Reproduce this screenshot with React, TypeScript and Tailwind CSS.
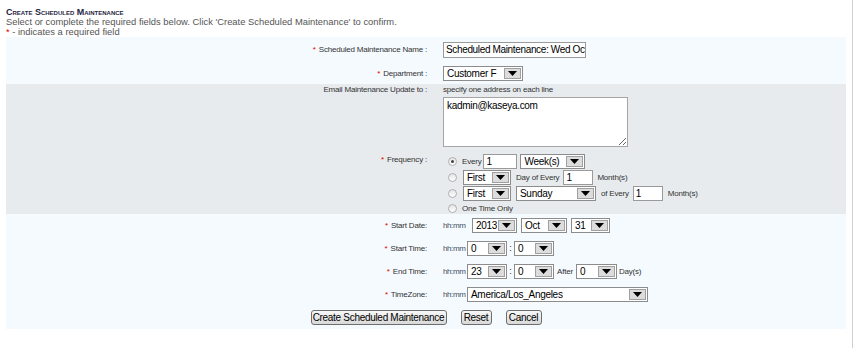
import React from 'react'

function Star() {
  return <span className="mr-[3px] text-[#e00000]">*</span>
}

function Label({ text, req, className = '' }: { text: string; req?: boolean; className?: string }) {
  return (
    <div className={`w-[421px] shrink-0 text-right text-[8px] tracking-[-0.2px] text-[#333] ${className}`}>
      {req && <Star />}
      {text}
    </div>
  )
}

function Select({ value, w }: { value: string; w: string }) {
  return (
    <div className={`flex h-[15px] shrink-0 border border-[#8c8c8c] bg-white ${w}`}>
      <span className="flex-1 overflow-hidden whitespace-nowrap pl-[3px] text-[10px] leading-[13px] tracking-[-0.3px] text-black">
        {value}
      </span>
      <span className="m-[1px] flex w-[17px] items-center justify-center border border-[#a0a0a0] bg-[#dcdcdc]">
        <svg width="9" height="5" viewBox="0 0 9 5">
          <path d="M0 0H9L4.5 5Z" fill="#000" />
        </svg>
      </span>
    </div>
  )
}

function Field({ value, w }: { value: string; w: string }) {
  return (
    <div
      className={`h-[15px] shrink-0 overflow-hidden whitespace-nowrap border border-[#9a9a9a] bg-white pl-[2px] text-[10px] leading-[13px] text-black ${w}`}
    >
      {value}
    </div>
  )
}

function Radio({ checked }: { checked?: boolean }) {
  return (
    <span className="ml-[5px] flex h-[9px] w-[9px] shrink-0 items-center justify-center rounded-full border border-[#b0b0b0] bg-linear-to-b from-[#e4e4e4] to-white">
      {checked && <span className="h-[3px] w-[3px] rounded-full bg-[#444]" />}
    </span>
  )
}

function Small({ children, className = '' }: { children: React.ReactNode; className?: string }) {
  return (
    <span className={`shrink-0 whitespace-nowrap text-[8px] tracking-[-0.2px] text-[#333] ${className}`}>{children}</span>
  )
}

function HhMm() {
  return <span className="w-[24px] shrink-0 text-[8px] tracking-[-0.4px] text-[#3f4f60]">hh:mm</span>
}

function Button({ label, w }: { label: string; w: string }) {
  return (
    <div
      className={`flex h-[15px] items-center justify-center rounded-[3px] border border-[#6e6e6e] bg-linear-to-b from-[#f8f8f8] to-[#d8d8d8] text-[10px] tracking-[-0.3px] text-black ${w}`}
    >
      {label}
    </div>
  )
}

export default function App() {
  return (
    <div className="h-[348px] w-[853px] border-r border-[#d0d0d0] bg-white font-['Liberation_Sans',Arial,sans-serif]">
      <div className="px-[6px] pt-[7px]">
        <div className="h-[10px] text-[9px] font-bold leading-[10px] text-[#1f2340] [font-variant:small-caps]">
          Create Scheduled Maintenance
        </div>
        <div className="h-[10px] text-[9.4px] leading-[10px] text-[#555]">
          Select or complete the required fields below. Click 'Create Scheduled Maintenance' to confirm.
        </div>
        <div className="h-[10px] text-[9.4px] leading-[10px] text-[#555]">
          <span className="text-[#e00000]">*</span> - indicates a required field
        </div>
      </div>

      <div className="ml-[6px] w-[840px]">
        {/* name + department */}
        <div className="flex flex-col gap-[8px] bg-[#f5faff] pb-[3px] pt-[5px]">
          <div className="flex h-[16px] items-center">
            <Label text="Scheduled Maintenance Name :" req />
            <div className="ml-[16px] h-[16px] w-[143px] overflow-hidden whitespace-nowrap border border-[#9a9a9a] bg-white pl-[2px] text-[10px] leading-[14px] tracking-[-0.35px] text-black">
              Scheduled Maintenance: Wed Oct
            </div>
          </div>
          <div className="flex h-[15px] items-center">
            <Label text="Department :" req />
            <div className="ml-[16px]">
              <Select value="Customer F" w="w-[80px]" />
            </div>
          </div>
        </div>

        {/* email + frequency */}
        <div className="h-[130px] bg-[#e7ebee]">
          <div className="flex">
            <Label text="Email Maintenance Update to :" className="leading-[12px]" />
            <div className="ml-[16px]">
              <div className="h-[12px] text-[8px] leading-[12px] tracking-[-0.2px] text-[#333]">
                specify one address on each line
              </div>
              <textarea
                readOnly
                defaultValue="kadmin@kaseya.com"
                className="mt-[1px] block h-[50px] w-[185px] resize border border-[#a5a5a5] bg-white px-[3px] py-[2px] text-[10px] leading-[12px] tracking-[-0.3px] text-black outline-none"
              />
            </div>
          </div>
          <div className="mt-[7px] flex">
            <Label text="Frequency :" req className="leading-[12px]" />
            <div className="ml-[16px] flex flex-col">
              <div className="flex h-[15px] items-center">
                <Radio checked />
                <Small className="ml-[5px]">Every</Small>
                <Field value="1" w="ml-[2px] w-[34px]" />
                <div className="ml-[3px]">
                  <Select value="Week(s)" w="w-[65px]" />
                </div>
              </div>
              <div className="mt-[1px] flex h-[15px] items-center">
                <Radio />
                <div className="ml-[6px]">
                  <Select value="First" w="w-[48px]" />
                </div>
                <Small className="ml-[5px]">Day of Every</Small>
                <Field value="1" w="ml-[4px] w-[30px]" />
                <Small className="ml-[4px]">Month(s)</Small>
              </div>
              <div className="mt-[1px] flex h-[15px] items-center">
                <Radio />
                <div className="ml-[6px]">
                  <Select value="First" w="w-[48px]" />
                </div>
                <div className="ml-[5px]">
                  <Select value="Sunday" w="w-[80px]" />
                </div>
                <Small className="ml-[5px]">of Every</Small>
                <Field value="1" w="ml-[4px] w-[30px]" />
                <Small className="ml-[5px]">Month(s)</Small>
              </div>
              <div className="mt-[2px] flex h-[11px] items-center">
                <Radio />
                <Small className="ml-[5px]">One Time Only</Small>
              </div>
            </div>
          </div>
        </div>

        {/* dates + times */}
        <div className="flex flex-col gap-[8px] bg-[#f5faff] pb-[4px] pt-[4px]">
          <div className="flex h-[15px] items-center">
            <Label text="Start Date:" req />
            <div className="ml-[16px] flex items-center">
              <HhMm />
              <div className="ml-[5px]">
                <Select value="2013" w="w-[45px]" />
              </div>
              <div className="ml-[4px]">
                <Select value="Oct" w="w-[46px]" />
              </div>
              <div className="ml-[4px]">
                <Select value="31" w="w-[39px]" />
              </div>
            </div>
          </div>
          <div className="flex h-[15px] items-center">
            <Label text="Start Time:" req />
            <div className="ml-[16px] flex items-center">
              <HhMm />
              <Select value="0" w="w-[40px]" />
              <span className="w-[7px] text-center text-[9px] text-[#333]">:</span>
              <Select value="0" w="w-[40px]" />
            </div>
          </div>
          <div className="flex h-[15px] items-center">
            <Label text="End Time:" req />
            <div className="ml-[16px] flex items-center">
              <HhMm />
              <Select value="23" w="w-[40px]" />
              <span className="w-[7px] text-center text-[9px] text-[#333]">:</span>
              <Select value="0" w="w-[40px]" />
              <Small className="ml-[3px]">After</Small>
              <div className="ml-[3px]">
                <Select value="0" w="w-[41px]" />
              </div>
              <Small className="ml-[2px]">Day(s)</Small>
            </div>
          </div>
          <div className="flex h-[15px] items-center">
            <Label text="TimeZone:" req />
            <div className="ml-[16px] flex items-center">
              <HhMm />
              <Select value="America/Los_Angeles" w="w-[181px]" />
            </div>
          </div>
          <div className="flex h-[15px] items-center justify-center gap-[14px]">
            <Button label="Create Scheduled Maintenance" w="w-[136px]" />
            <Button label="Reset" w="w-[31px]" />
            <Button label="Cancel" w="w-[36px]" />
          </div>
        </div>
      </div>
    </div>
  )
}
